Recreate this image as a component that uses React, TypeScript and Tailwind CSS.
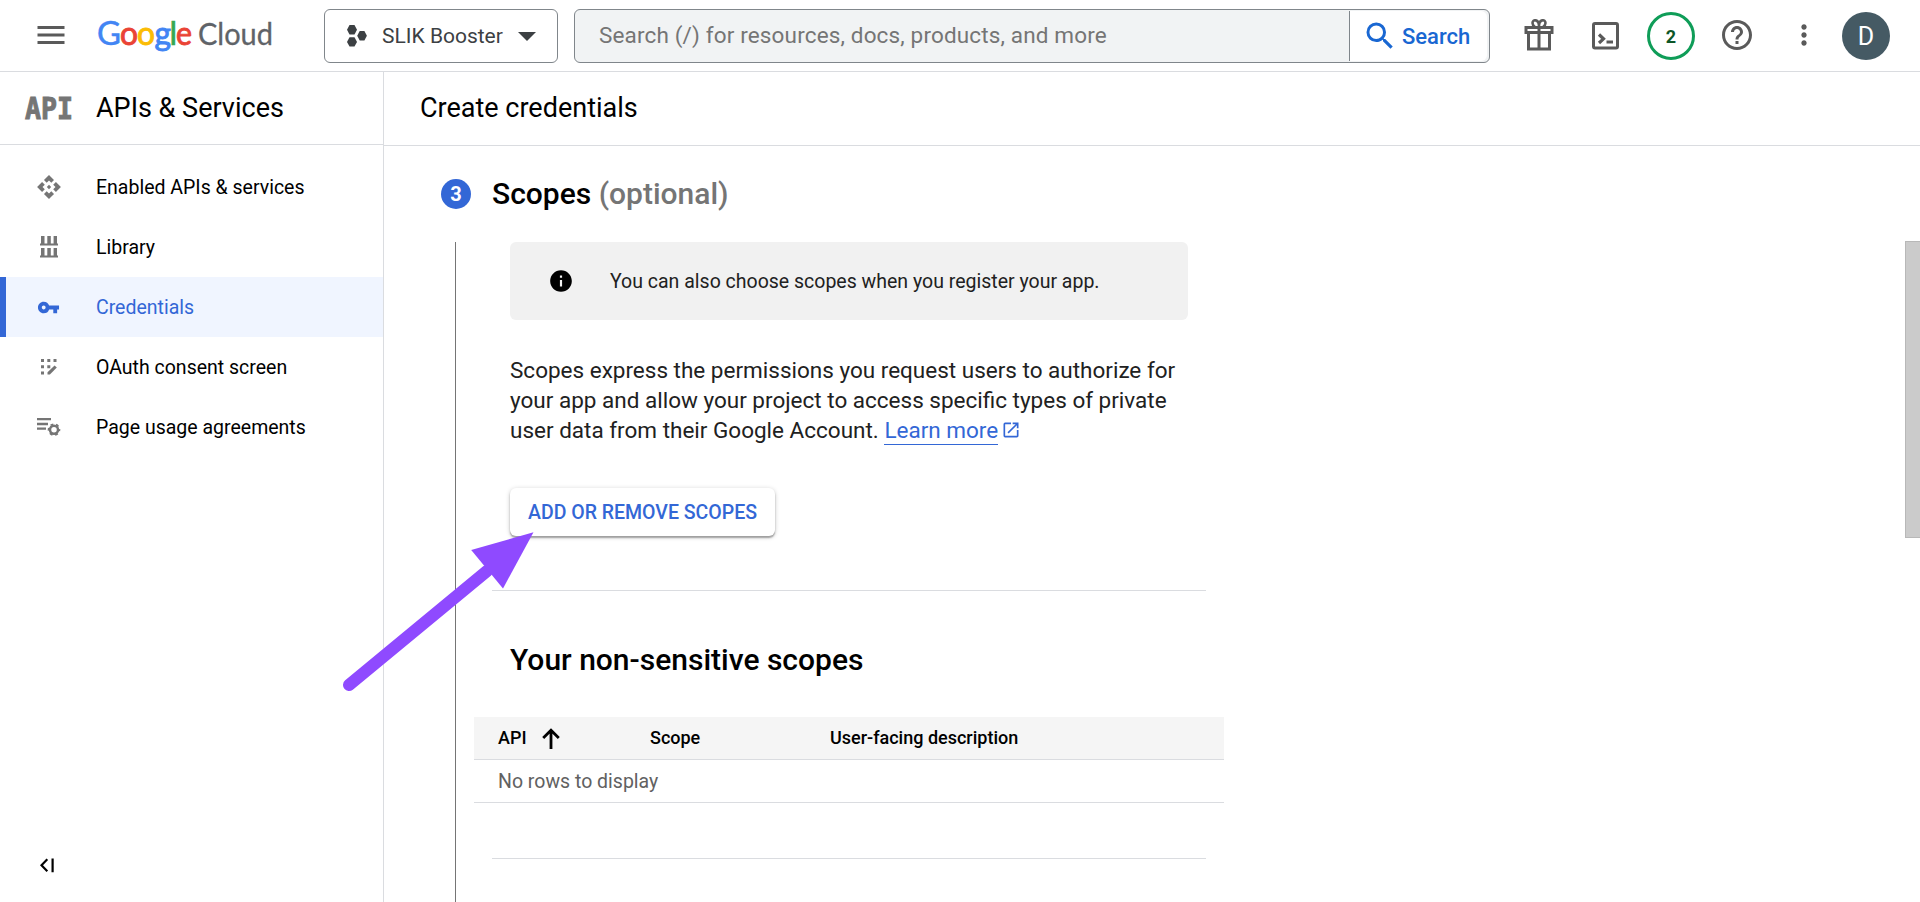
import React from "react";
import {
  MdMenu, MdSearch, MdApi, MdVpnKey, MdInfo,
  MdOpenInNew, MdHelpOutline, MdMoreVert,
} from "react-icons/md";

function CloudLogo() {
  return (
    <svg width="176" height="36" viewBox="0 0 176 36" className="block shrink-0 overflow-visible font-['Lato']">
      <g fontSize="32">
        <text x="0" y="28" fill="#4285f4" stroke="#4285f4" strokeWidth="0.500" textLength="24" lengthAdjust="spacingAndGlyphs">G</text>
        <text x="23" y="28" fill="#ea4335" textLength="18" lengthAdjust="spacingAndGlyphs" stroke="#ea4335" strokeWidth="0.900">o</text>
        <text x="40" y="28" fill="#fbbc04" textLength="18" lengthAdjust="spacingAndGlyphs" stroke="#fbbc04" strokeWidth="0.900">o</text>
        <text x="57.500" y="28" fill="#4285f4" textLength="16.500" lengthAdjust="spacingAndGlyphs" stroke="#4285f4" strokeWidth="0.900">g</text>
        <text x="72.500" y="28" fill="#34a853" stroke="#34a853" strokeWidth="0.700">l</text>
        <text x="79" y="28" fill="#ea4335" textLength="16" lengthAdjust="spacingAndGlyphs" stroke="#ea4335" strokeWidth="0.900">e</text>
      </g>
      <text x="101" y="28" fontSize="31" fill="#5f6368" stroke="#5f6368" strokeWidth="0.300" textLength="75" lengthAdjust="spacingAndGlyphs">Cloud</text>
    </svg>
  );
}

function ProjectIcon() {
  return (
    <svg width="20" height="22" viewBox="0 0 20 22" fill="#3c4043" className="block shrink-0">
      <path d="M2.500 0h5l2.500 4.700L7.500 9.400h-5L0 4.700z" />
      <path d="M2.500 12.200h5l2.500 4.700-2.500 4.700h-5L0 16.900z" />
      <path d="M12.700 6h4.700l2.500 4.700-2.500 4.700h-4.700l-2.500-4.700z" />
    </svg>
  );
}

function GiftIcon() {
  return (
    <svg width="30" height="32" viewBox="0 0 30 32" fill="none" stroke="#5a5a5a" strokeWidth="3" className="block">
      <path d="M2 8.500h26v5H2z" />
      <path d="M4.500 13.500V30h21V13.500M15 8v22" />
      <path d="M15 7C15 0 8.500 0 8.500 4c0 2 1 3 2.500 4M15 7c0-7 6.500-7 6.500-3 0 2-1 3-2.500 4" strokeWidth="2.600" />
    </svg>
  );
}

function ShellIcon() {
  return (
    <svg width="27" height="28" viewBox="0 0 27 28" fill="none" stroke="#5a5a5a" className="block">
      <rect x="1.500" y="1.500" width="24" height="24.500" rx="1.500" strokeWidth="3" />
      <path d="M7 12.500l4.500 4.300L7 21" strokeWidth="3.200" />
      <path d="M14.500 20h6.500" strokeWidth="3" />
    </svg>
  );
}

function LibraryIcon() {
  return (
    <svg width="18" height="22" viewBox="0 0 18 22" fill="#757575" className="block">
      <path d="M1 0h3.500v7.500h2.800V0h3.500v7.500h2.800V0H17v7.500h1v2H0v-2h1zM1 12h3.500v7.500h2.800V12h3.500v7.500h2.800V12H17v7.500h1v2H0v-2h1z" />
    </svg>
  );
}

function ConsentIcon() {
  return (
    <svg width="16" height="16" viewBox="0 0 16 16" fill="#757575" className="block">
      <path d="M0 0h3v3H0zM6.300 0h3v3h-3zM12.500 0h3v3h-3zM0 6.200h3v3H0zM6.300 6.200h3v3h-3zM0 12.400h3v3H0z" />
      <path d="M6.500 13.300v2.200h2.400l6.900-6.900-2.200-2.200z" />
    </svg>
  );
}

function AgreementIcon() {
  return (
    <svg width="24" height="19" viewBox="0 0 24 19" fill="none" stroke="#757575" className="block">
      <path d="M0 1.200h14M0 6h11M0 10.700h9" strokeWidth="2.300" />
      <circle cx="17" cy="11.700" r="4" strokeWidth="2.500" />
      <circle cx="17" cy="11.700" r="5.500" strokeWidth="1.600" strokeDasharray="2.880 2.880" strokeDashoffset="1.440" />
    </svg>
  );
}

function SortArrow() {
  return (
    <svg width="18" height="21" viewBox="0 0 18 21" fill="none" stroke="#000" strokeWidth="2.800" className="mt-0.5 ml-[10px] block shrink-0">
      <path d="M9 21V2.500M1.200 10L9 2.200l7.800 7.800" />
    </svg>
  );
}

const nav = [
  { label: "Enabled APIs & services", icon: <MdApi size={26} color="#757575" /> },
  { label: "Library", icon: <LibraryIcon /> },
  { label: "Credentials", icon: <MdVpnKey size={23} color="#3367d6" />, active: true },
  { label: "OAuth consent screen", icon: <ConsentIcon /> },
  { label: "Page usage agreements", icon: <AgreementIcon /> },
];

function Header() {
  return (
    <header className="flex h-[72px] shrink-0 items-start border-b border-[#dadce0] pl-[33px]">
      <MdMenu size={36} color="#5a5a5a" className="mt-[17px] shrink-0" />
      <div className="mt-[17px] ml-7 w-[227px]"><CloudLogo /></div>
      <button className="mt-[9px] flex h-[54px] w-[234px] shrink-0 items-center rounded-md border border-[#80868b] pl-[22px]">
        <ProjectIcon />
        <span className="ml-[15px] w-[123px] pt-px text-left text-[21px] whitespace-nowrap text-[#3c4043]">SLIK Booster</span>
        <svg width="18" height="9" viewBox="0 0 18 9" className="ml-[13px]"><path d="M0 0h18L9 9z" fill="#3c4043" /></svg>
      </button>
      <div className="mt-[9px] ml-4 flex h-[54px] w-[916px] shrink-0 items-center rounded-md border border-[#80868b] bg-[#f1f3f4] pr-0.5">
        <span className="flex-1 pl-6 text-[22.500px] tracking-[0.150px] whitespace-nowrap text-[#757575]">Search (/) for resources, docs, products, and more</span>
        <div className="flex h-[50px] w-[138px] items-center rounded-r-md border-l border-[#80868b] bg-white pl-3">
          <MdSearch size={36} color="#1967d2" className="shrink-0" />
          <span className="ml-1 text-[22px] font-medium text-[#1967d2]">Search</span>
        </div>
      </div>
      <div className="mt-[19px] ml-[34px] w-[68px]"><GiftIcon /></div>
      <div className="mt-[22px] w-[55px]"><ShellIcon /></div>
      <div className="mt-3 flex size-12 items-center justify-center rounded-full border-[3px] border-[#0f9d58] text-[18px] font-bold text-[#0d5628]">2</div>
      <MdHelpOutline size={36} color="#5a5a5a" className="mt-[17px] ml-6" />
      <MdMoreVert size={32} color="#5a5a5a" className="mt-[19px] ml-[33px]" />
      <div className="mt-3 ml-[22px] flex size-12 items-center justify-center rounded-full bg-[#455a64] pt-0.5 text-[25px] text-white">D</div>
    </header>
  );
}

function Sidebar() {
  return (
    <aside className="flex w-96 shrink-0 flex-col border-r border-[#dadce0]">
      <div className="flex h-[73px] items-center border-b border-[#dadce0] pl-[25px]">
        <svg width="48" height="26" viewBox="0 0 48 26" className="block shrink-0 overflow-visible">
          <text x="0" y="24" fontSize="31" fontWeight="bold" fill="#757575" stroke="#757575" strokeWidth="1" className="font-['DejaVu_Sans_Mono']" textLength="48" lengthAdjust="spacingAndGlyphs">API</text>
        </svg>
        <h1 className="ml-[23px] text-[27px] whitespace-nowrap text-black">APIs &amp; Services</h1>
      </div>
      <nav className="mt-3 flex flex-col">
        {nav.map((n) => (
          <a
            key={n.label}
            className={
              n.active
                ? "flex h-[60px] items-center border-l-6 border-[#3367d6] bg-[#f0f5ff] text-[#3367d6]"
                : "flex h-[60px] items-center border-l-6 border-transparent text-black"
            }
          >
            <span className="ml-7 flex w-[29px] justify-center">{n.icon}</span>
            <span className="ml-[33px] pt-0.5 text-[19.500px] whitespace-nowrap">{n.label}</span>
          </a>
        ))}
      </nav>
      <div className="mt-auto mb-[29px] ml-10">
        <svg width="15" height="15" viewBox="0 0 15 15" fill="none" stroke="#000" strokeWidth="2.200" className="block">
          <path d="M7.300 1.300L1.500 7.300l5.800 6M12.600 .5v13.700" />
        </svg>
      </div>
    </aside>
  );
}

function ScopeTable() {
  return (
    <div className="mt-[37px] ml-[18px] w-[750px] text-black">
      <div className="flex h-[43px] items-center border-b border-[#dadce0] bg-[#f5f5f5] pb-0.5 text-[18px] font-medium">
        <div className="flex w-44 items-center pl-6">
          <span className="w-[34px]">API</span>
          <SortArrow />
        </div>
        <span className="w-[180px]">Scope</span>
        <span>User-facing description</span>
      </div>
      <div className="flex h-[43px] items-center border-b border-[#dadce0] pt-0.5 pl-6 text-[19.500px] text-[#616161]">No rows to display</div>
    </div>
  );
}

function Content() {
  return (
    <main className="relative flex min-w-0 flex-1 flex-col">
      <div className="flex h-[74px] shrink-0 items-center border-b border-[#dadce0] pl-9">
        <h2 className="text-[27px] text-black">Create credentials</h2>
      </div>
      <div className="flex h-24 shrink-0 items-center pl-[57px]">
        <span className="flex size-[30px] items-center justify-center rounded-full bg-[#3367d6] text-[20px] font-bold text-white">3</span>
        <h3 className="ml-[21px] pb-0.5 text-[30px] font-medium text-black">Scopes <span className="text-[#757575]">(optional)</span></h3>
      </div>
      <div className="ml-[71px] flex-1 border-l border-[#757575]">
        <div className="ml-[54px] flex h-[78px] w-[678px] items-center rounded-md bg-[#f1f1f1]">
          <MdInfo size={26} color="#000" className="ml-[38px]" />
          <span className="ml-9 pt-0.5 text-[19.500px] whitespace-nowrap text-[#212121]">You can also choose scopes when you register your app.</span>
        </div>
        <p className="mt-[35px] ml-[54px] w-[700px] text-[22.500px] leading-[30px] whitespace-nowrap text-[#212121]">
          Scopes express the permissions you request users to authorize for<br />
          your app and allow your project to access specific types of private<br />
          user data from their Google Account.{" "}
          <a className="text-[#3367d6]">
            <span className="border-b border-[#3367d6] pb-px">Learn more</span>
            <MdOpenInNew size={20} className="mb-1 ml-[3px] inline-block" />
          </a>
        </p>
        <button className="mt-[43px] ml-[54px] flex h-12 w-[265px] items-center justify-center rounded-md bg-white pt-0.5 text-[19.500px] font-medium whitespace-nowrap text-[#3367d6] shadow-[0_1px_5px_rgba(0,0,0,0.2),0_2px_2px_rgba(0,0,0,0.2),0_2px_1px_rgba(0,0,0,0.12)]">
          ADD OR REMOVE SCOPES
        </button>
        <hr className="mt-[54px] ml-9 w-[714px] border-[#dadce0]" />
        <h3 className="mt-12 ml-[54px] text-[30px] leading-[41px] font-medium text-black">Your non-sensitive scopes</h3>
        <ScopeTable />
        <hr className="mt-[55px] ml-9 w-[714px] border-[#dadce0]" />
      </div>
      <div className="absolute top-[169px] right-0 h-[297px] w-[15px] border border-r-0 border-[#b8b8b8] bg-[#cbcbcb]" />
    </main>
  );
}

export default function App() {
  return (
    <div className="relative flex h-[902px] w-[1920px] flex-col overflow-hidden bg-white font-['Roboto',sans-serif] leading-normal">
      <Header />
      <div className="flex min-h-0 flex-1">
        <Sidebar />
        <Content />
      </div>
      <svg width="194" height="162" viewBox="0 0 194 162" className="pointer-events-none absolute top-[531px] left-[342px]">
        <path d="M7 154L145 40" stroke="#8f4aff" strokeWidth="12" strokeLinecap="round" />
        <path d="M191.500 1.200L161 57.500 129.200 19z" fill="#8f4aff" />
      </svg>
    </div>
  );
}
